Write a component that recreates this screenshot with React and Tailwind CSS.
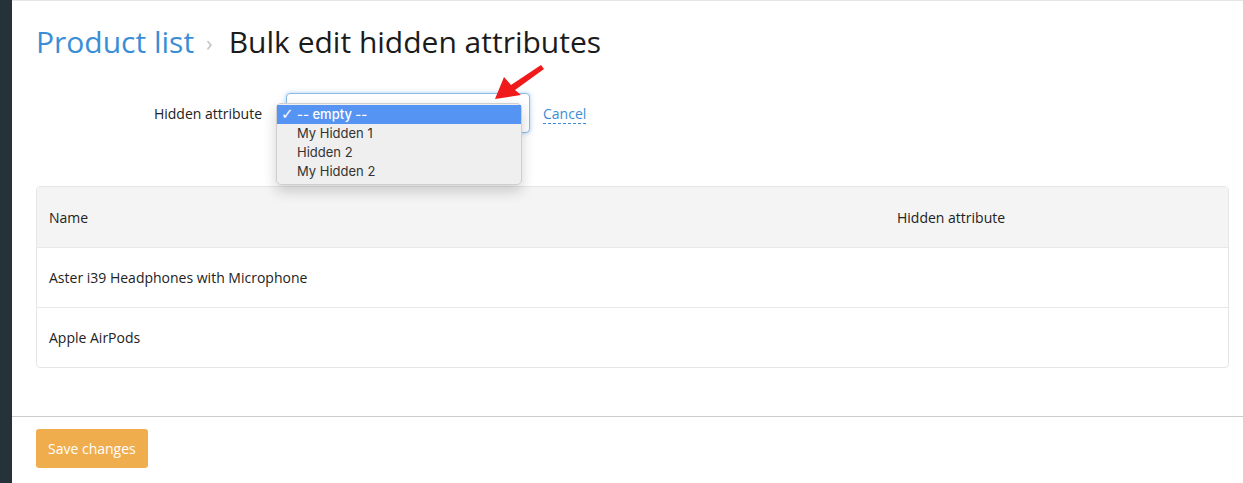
const FONT = { fontFamily: '"Open Sans", "Noto Sans", sans-serif' };
const MAC = { fontFamily: 'Inter, "Liberation Sans", sans-serif' };

const OPTIONS = ['-- empty --', 'My Hidden 1', 'Hidden 2', 'My Hidden 2'];
const PRODUCTS = ['Aster i39 Headphones with Microphone', 'Apple AirPods'];

function Arrow() {
  return (
    <svg className="absolute left-[490px] top-[60px]" width="60" height="45" viewBox="490 60 60 45">
      <polygon
        points="495,99 504,77 511,85 541,65 544,69 515,90 521,95"
        fill="#f01a1a"
      />
    </svg>
  );
}

function SelectMenu() {
  return (
    <div
      className="absolute left-[276px] top-[103px] w-[246px] h-[82px] rounded-[5px] bg-[#efefef] border border-[#cfcfcf] shadow-[0_6px_14px_rgba(0,0,0,0.18)] pt-px text-[13px] text-[#333]"
      style={MAC}
    >
      {OPTIONS.map((o, i) => (
        <div
          key={o}
          className={`h-[19px] flex items-center ${i === 0 ? 'bg-[#5694f4] text-white font-medium' : ''}`}
        >
          <span className="w-[20px] pl-[4px] text-[15px] leading-[19px] font-bold" style={{ fontFamily: '"DejaVu Sans", sans-serif' }}>
            {i === 0 ? '✓' : ''}
          </span>
          {o}
        </div>
      ))}
    </div>
  );
}

export default function App() {
  return (
    <div className="flex w-full h-[483px] bg-white relative overflow-hidden" style={FONT}>
      <div className="w-[12px] bg-[#25323a] flex-shrink-0" />
      <div className="flex-1 flex flex-col border-t border-[#e6e6e6]">
        <div className="pl-[24px] pr-[14px]">
          <h1 className="pt-[21px] text-[30px] leading-[40px] text-[#1b1b1b] flex items-center">
            <span className="text-[#3a8ed6]">Product list</span>
            <span className="text-[#c4c4c4] text-[22px] ml-[12px] mr-[16px]">›</span>
            <span>Bulk edit hidden attributes</span>
          </h1>

          <div className="flex items-center mt-[31px] text-[14px] text-[#222]">
            <label className="w-[250px] pr-[24px] text-right">Hidden attribute</label>
            <div className="w-[244px] h-[40px] rounded-[4px] border border-[#8dbbe8] shadow-[0_0_5px_rgba(70,150,230,0.45)] bg-white" />
            <a className="ml-[13px] mt-[2px] text-[#3a8ed6] border-b border-dashed border-[#3a8ed6] leading-[18px]">Cancel</a>
          </div>

          <div className="mt-[53px] border border-[#e6e6e6] rounded-[4px] text-[14px] text-[#222]">
            <div className="flex items-center h-[61px] bg-[#f4f4f4] border-b border-[#e8e8e8]">
              <div className="flex-1 pl-[12px]">Name</div>
              <div className="w-[331px]">Hidden attribute</div>
            </div>
            {PRODUCTS.map((p, i) => (
              <div key={p} className={`flex items-center ${i > 0 ? 'h-[60px] border-t border-[#e8e8e8]' : 'h-[59px]'}`}>
                <div className="flex-1 pl-[12px]">{p}</div>
                <div className="w-[331px]" />
              </div>
            ))}
          </div>
        </div>

        <div className="mt-[48px] border-t border-[#cccccc] pl-[24px] pt-[12px]">
          <button className="h-[39px] px-[12px] rounded-[3px] bg-[#f0ad4e] text-white text-[14px]">
            Save changes
          </button>
        </div>
      </div>
      <SelectMenu />
      <Arrow />
    </div>
  );
}
